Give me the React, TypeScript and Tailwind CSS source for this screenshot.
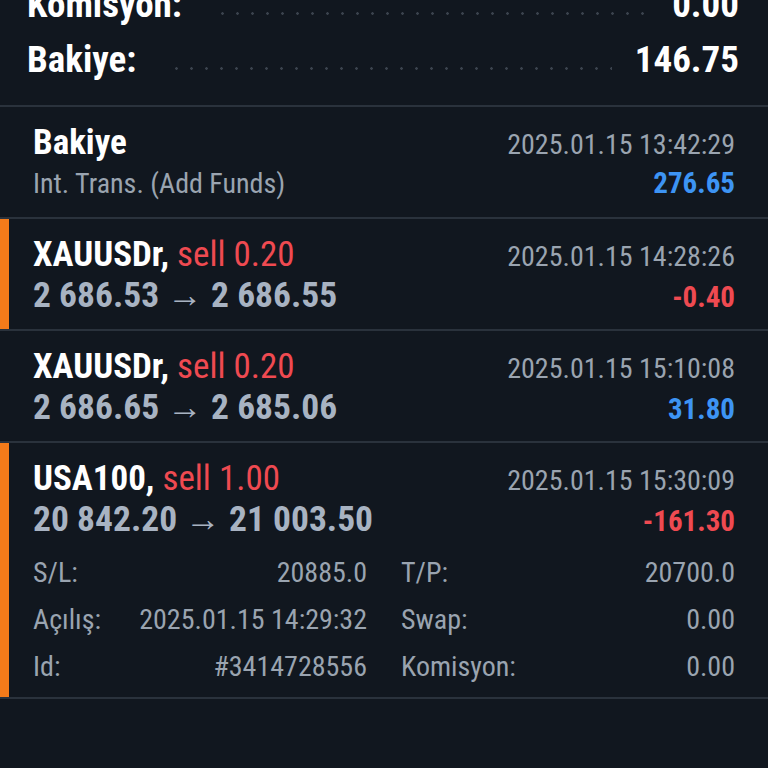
import React from "react";

type Detail = { label: string; value: string };

type Deal = {
  title: string;
  side?: string;
  time: string;
  sub: string;
  subBold: boolean;
  result: string;
  tone: "red" | "blue";
  marked: boolean;
  details?: Detail[][];
};

const deals: Deal[] = [
  {
    title: "Bakiye",
    time: "2025.01.15 13:42:29",
    sub: "Int. Trans. (Add Funds)",
    subBold: false,
    result: "276.65",
    tone: "blue",
    marked: false,
  },
  {
    title: "XAUUSDr,",
    side: "sell 0.20",
    time: "2025.01.15 14:28:26",
    sub: "2 686.53 → 2 686.55",
    subBold: true,
    result: "-0.40",
    tone: "red",
    marked: true,
  },
  {
    title: "XAUUSDr,",
    side: "sell 0.20",
    time: "2025.01.15 15:10:08",
    sub: "2 686.65 → 2 685.06",
    subBold: true,
    result: "31.80",
    tone: "blue",
    marked: false,
  },
  {
    title: "USA100,",
    side: "sell 1.00",
    time: "2025.01.15 15:30:09",
    sub: "20 842.20 → 21 003.50",
    subBold: true,
    result: "-161.30",
    tone: "red",
    marked: true,
    details: [
      [
        { label: "S/L:", value: "20885.0" },
        { label: "T/P:", value: "20700.0" },
      ],
      [
        { label: "Açılış:", value: "2025.01.15 14:29:32" },
        { label: "Swap:", value: "0.00" },
      ],
      [
        { label: "Id:", value: "#3414728556" },
        { label: "Komisyon:", value: "0.00" },
      ],
    ],
  },
];

function SummaryRow({ label, value }: { label: string; value: string }) {
  return (
    <div className="flex h-[55px] items-center">
      <span className="text-[37px] font-bold text-white">{label}</span>
      <div className="ml-[33px] mr-[23px] mt-[18px] h-[3px] flex-1 bg-[radial-gradient(circle,#3a424d_1px,transparent_1.6px)] bg-[length:15px_3px] bg-repeat-x" />
      <span className="text-[37px] font-bold text-white">{value}</span>
    </div>
  );
}

function DealItem({ deal }: { deal: Deal }) {
  const tone = deal.tone === "red" ? "text-[#ef4a51]" : "text-[#3d94f4]";
  return (
    <div className="flex border-t-2 border-[#2a323c]">
      <div className={deal.marked ? "w-[9px] bg-[#f47b1a]" : "w-[9px]"} />
      <div
        className={
          deal.details
            ? "flex-1 pl-[24px] pr-[33px] pt-[16px] pb-[7px]"
            : "flex-1 pl-[24px] pr-[33px] pt-[16px] pb-[14px]"
        }
      >
        <div className="flex h-[40px] items-baseline justify-between leading-[40px]">
          <span className="text-[35px] font-bold text-white">
            {deal.title}
            {deal.side && <span className="font-normal text-[#ef4a51]"> {deal.side}</span>}
          </span>
          <span className="text-[28px] text-[#9aa4b0]">{deal.time}</span>
        </div>
        <div className="flex h-[40px] items-baseline justify-between leading-[40px]">
          <span
            className={
              deal.subBold
                ? "text-[35.5px] font-bold text-[#a8b3c2]"
                : "text-[28px] text-[#9aa4b0]"
            }
          >
            {deal.sub}
          </span>
          <span className={`text-[29px] font-bold ${tone}`}>{deal.result}</span>
        </div>
        {deal.details && (
          <div className="mt-[10px] flex flex-col">
            {deal.details.map((row, i) => (
              <div key={i} className="grid h-[47px] grid-cols-2 items-center gap-x-[34px]">
                {row.map((d) => (
                  <div key={d.label} className="flex justify-between text-[28px] text-[#9aa4b0]">
                    <span>{d.label}</span>
                    <span>{d.value}</span>
                  </div>
                ))}
              </div>
            ))}
          </div>
        )}
      </div>
    </div>
  );
}

export default function App() {
  return (
    <div className="h-[768px] w-[768px] overflow-hidden bg-[#11171f] font-['Roboto_Condensed',Roboto,sans-serif] leading-none">
      <div className="-mt-[23px] pl-[27px] pr-[29px] pb-[18px]">
        <SummaryRow label="Komisyon:" value="0.00" />
        <SummaryRow label="Bakiye:" value="146.75" />
      </div>
      {deals.map((d, i) => (
        <DealItem key={i} deal={d} />
      ))}
      <div className="border-t-2 border-[#2a323c]" />
    </div>
  );
}
